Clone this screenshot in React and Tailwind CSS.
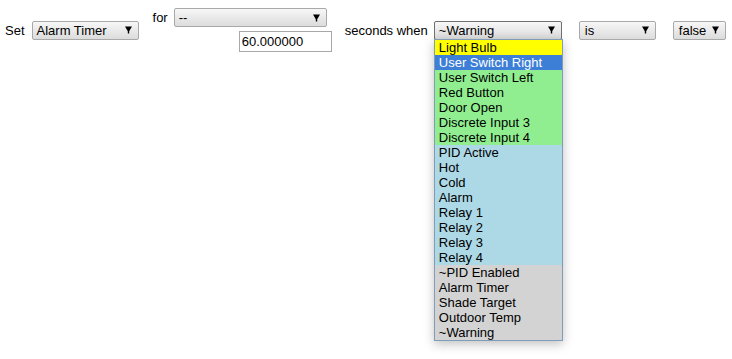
import React from "react";

function Arrow() {
  return (
    <svg width="7" height="8" viewBox="0 0 7 8" className="shrink-0">
      <path d="M0 0.5H7L4.2 5.2V7.5H2.8V5.2Z" fill="#000" />
    </svg>
  );
}

function Select({ label, w, focused = false, pl = "pl-[4px]" }) {
  return (
    <div
      className={`flex h-[19px] items-center justify-between rounded-[2px] border bg-gradient-to-b from-[#f7f7f7] to-[#dcdcdc] pr-[6px] ${pl} ${
        focused ? "border-[#6f6f6f]" : "border-[#a9a9a9]"
      } ${w}`}
    >
      <span className="leading-[17px] whitespace-nowrap">{label}</span>
      <Arrow />
    </div>
  );
}

const items = [
  ["Light Bulb", "bg-[#ffff00] text-black"],
  ["User Switch Right", "bg-[#3d7ed6] text-white"],
  ["User Switch Left", "bg-[#90ee90]"],
  ["Red Button", "bg-[#90ee90]"],
  ["Door Open", "bg-[#90ee90]"],
  ["Discrete Input 3", "bg-[#90ee90]"],
  ["Discrete Input 4", "bg-[#90ee90]"],
  ["PID Active", "bg-[#add8e6]"],
  ["Hot", "bg-[#add8e6]"],
  ["Cold", "bg-[#add8e6]"],
  ["Alarm", "bg-[#add8e6]"],
  ["Relay 1", "bg-[#add8e6]"],
  ["Relay 2", "bg-[#add8e6]"],
  ["Relay 3", "bg-[#add8e6]"],
  ["Relay 4", "bg-[#add8e6]"],
  ["~PID Enabled", "bg-[#d3d3d3]"],
  ["Alarm Timer", "bg-[#d3d3d3]"],
  ["Shade Target", "bg-[#d3d3d3]"],
  ["Outdoor Temp", "bg-[#d3d3d3]"],
  ["~Warning", "bg-[#d3d3d3]"],
];

export default function App() {
  return (
    <div className="h-[359px] w-[732px] bg-white font-['Liberation_Sans',Arial,sans-serif] text-[13px] text-black">
      <div className="flex items-center pt-[8px] pl-[5px]">
        <span className="leading-[15px]">Set</span>
        <div className="ml-[7px]">
          <Select label="Alarm Timer" w="w-[107px]" pl="pl-[4px]" />
        </div>
        <div className="ml-[14px] flex flex-col">
          <div className="flex items-center">
            <span className="leading-[15px]">for</span>
            <div className="ml-[6px] mr-[5px]">
              <Select label="--" w="w-[153px]" />
            </div>
          </div>
          <div className="mt-[4px] flex justify-end">
            <div className="flex h-[21px] w-[93px] items-center border border-[#a8a8a8] bg-white pl-[2px]">
              <span className="leading-[15px]">60.000000</span>
            </div>
          </div>
        </div>
        <span className="ml-[13px] leading-[15px]">seconds when</span>
        <div className="relative ml-[6px]">
          <Select label="~Warning" w="w-[128px]" focused />
          <div className="absolute left-0 top-[18px] z-10 w-[129px] border border-[#7f9db9] bg-white shadow-[0_3px_10px_rgba(0,0,0,0.25)]">
            {items.map(([t, c]) => (
              <div key={t} className={`h-[15px] pl-[4px] leading-[15px] whitespace-nowrap ${c}`}>
                {t}
              </div>
            ))}
          </div>
        </div>
        <div className="ml-[17px]">
          <Select label="is" w="w-[77px]" pl="pl-[5px]" />
        </div>
        <div className="ml-[17px]">
          <Select label="false" w="w-[53px]" pl="pl-[5px]" />
        </div>
      </div>
    </div>
  );
}
